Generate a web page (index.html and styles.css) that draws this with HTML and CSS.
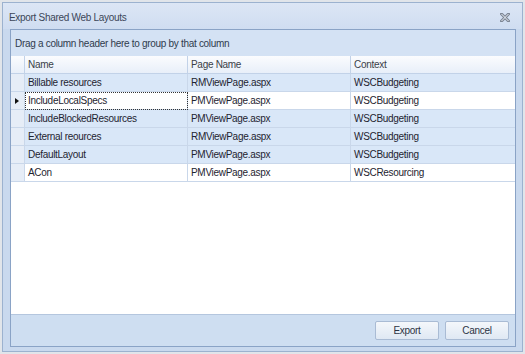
FILE: index.html
```html
<!DOCTYPE html>
<html lang="en">
<head>
    <meta charset="UTF-8">
    <title>Export Shared Web Layouts</title>
    <link rel="stylesheet" href="styles.css">
</head>
<body>
    <div class="dialog">
        <div class="titlebar">
            <span class="title">Export Shared Web Layouts</span>
            <span class="close">
                <svg width="10" height="9" viewBox="0 0 10 9">
                    <path d="M1.5 1 L8.5 8 M8.5 1 L1.5 8" stroke="#7c8594" stroke-width="3" stroke-linecap="square"/>
                    <path d="M1.5 1 L8.5 8 M8.5 1 L1.5 8" stroke="#eef2f7" stroke-width="1"/>
                </svg>
            </span>
        </div>
        <div class="panel">
            <div class="group-panel">Drag a column header here to group by that column</div>
            <div class="grid">
                <div class="row header">
                    <div class="cell ind"></div>
                    <div class="cell">Name</div>
                    <div class="cell">Page Name</div>
                    <div class="cell">Context</div>
                </div>
                <div class="row selected">
                    <div class="cell ind"></div>
                    <div class="cell">Billable resources</div>
                    <div class="cell">RMViewPage.aspx</div>
                    <div class="cell">WSCBudgeting</div>
                </div>
                <div class="row">
                    <div class="cell ind"><span class="arrow"></span></div>
                    <div class="cell focused">IncludeLocalSpecs</div>
                    <div class="cell">PMViewPage.aspx</div>
                    <div class="cell">WSCBudgeting</div>
                </div>
                <div class="row selected">
                    <div class="cell ind"></div>
                    <div class="cell">IncludeBlockedResources</div>
                    <div class="cell">PMViewPage.aspx</div>
                    <div class="cell">WSCBudgeting</div>
                </div>
                <div class="row selected">
                    <div class="cell ind"></div>
                    <div class="cell">External reources</div>
                    <div class="cell">RMViewPage.aspx</div>
                    <div class="cell">WSCBudgeting</div>
                </div>
                <div class="row selected">
                    <div class="cell ind"></div>
                    <div class="cell">DefaultLayout</div>
                    <div class="cell">PMViewPage.aspx</div>
                    <div class="cell">WSCBudgeting</div>
                </div>
                <div class="row">
                    <div class="cell ind"></div>
                    <div class="cell">ACon</div>
                    <div class="cell">PMViewPage.aspx</div>
                    <div class="cell">WSCResourcing</div>
                </div>
            </div>
            <div class="footer">
                <button class="btn">Export</button>
                <button class="btn">Cancel</button>
            </div>
        </div>
    </div>
</body>
</html>
```

FILE: styles.css
```css
body {
    margin: 0;
    padding: 2px 2px 0 2px;
    background-color: #e1e5ea;
    font-family: "Liberation Sans", Arial, sans-serif;
    font-size: 10px;
    letter-spacing: -0.3px;
    color: #1e2430;
}

.dialog {
    height: 348px;
    border: 1px solid #9cb2cf;
    background-color: #c9d9ee;
    display: flex;
    flex-direction: column;
}

.titlebar {
    height: 26px;
    display: flex;
    align-items: center;
    justify-content: space-between;
    padding: 0 12px 0 6px;
    background: linear-gradient(#dce6f5, #cfddf1);
}

.title {
    color: #3b4658;
    padding-top: 2px;
}

.close {
    display: flex;
    padding-top: 2px;
}

.panel {
    flex: 1;
    margin: 0 6px 4px 7px;
    border: 1px solid #8aa3c6;
    display: flex;
    flex-direction: column;
    background-color: #cedef1;
}

.group-panel {
    height: 26px;
    display: flex;
    align-items: center;
    padding-left: 4px;
    background-color: #d4e2f4;
    color: #2f3b4d;
}

.grid {
    flex: 1;
    background-color: #ffffff;
    border-bottom: 1px solid #b4c6de;
}

.row {
    display: grid;
    grid-template-columns: 14px 163px 163px 1fr;
    height: 18px;
}

.cell {
    box-sizing: border-box;
    border-right: 1px solid #c9d7ea;
    border-bottom: 1px solid #c9d7ea;
    padding-left: 3px;
    display: flex;
    align-items: center;
    white-space: nowrap;
    overflow: hidden;
}

.cell:last-child {
    border-right: none;
}

.header .cell {
    background: linear-gradient(#fbfcfe, #e8eff9);
    border-color: #c2d2e8;
    color: #3a3f48;
}

.selected .cell {
    background-color: #d9e7f8;
}

.cell.ind {
    background-color: #e6edf7;
    padding-left: 4px;
}

.selected .cell.ind {
    background-color: #e6edf7;
}

.focused {
    outline: 1px dotted #333;
    outline-offset: -1px;
}

.arrow {
    width: 0;
    height: 0;
    border-top: 3px solid transparent;
    border-bottom: 3px solid transparent;
    border-left: 4px solid #111;
}

.footer {
    height: 31px;
    display: flex;
    align-items: center;
    justify-content: flex-end;
    gap: 6px;
    padding-right: 6px;
}

.btn {
    width: 64px;
    height: 19px;
    font-family: "Liberation Sans", Arial, sans-serif;
    font-size: 10px;
    letter-spacing: -0.3px;
    color: #2c3444;
    background: linear-gradient(#f4f7fb, #dfe8f3);
    border: 1px solid #a9bbd4;
    border-radius: 2px;
    padding: 0;
}
```
